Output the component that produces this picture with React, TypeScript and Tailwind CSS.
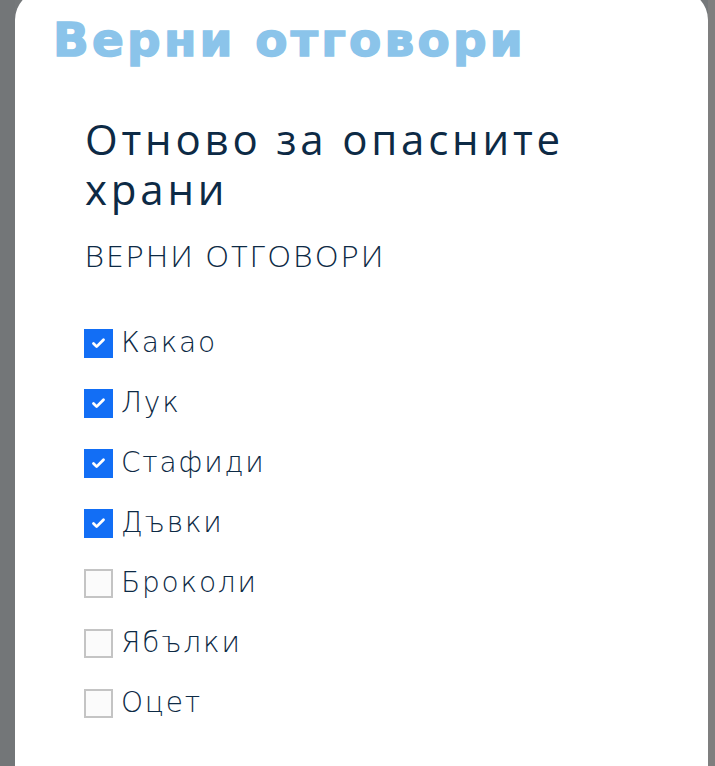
import { Check } from "lucide-react";

const answers = [
  { label: "Какао", checked: true },
  { label: "Лук", checked: true },
  { label: "Стафиди", checked: true },
  { label: "Дъвки", checked: true },
  { label: "Броколи", checked: false },
  { label: "Ябълки", checked: false },
  { label: "Оцет", checked: false },
];

export default function App() {
  return (
    <div className="h-[766px] w-[715px] overflow-hidden flex bg-[#75787a]">
      <div className="w-[15px] shrink-0 bg-[#737678]" />
      <div className="flex-1 bg-white rounded-t-[30px] -mt-[10px] pt-[20px]">
        <h1 className="pl-[38px] text-[47px] leading-[60px] font-bold text-[#8bc4ea] tracking-[3.2px] [-webkit-text-stroke:1.5px_#8bc4ea] font-['DejaVu_Sans',sans-serif]">
          Верни отговори
        </h1>

        <div className="pl-[69px] pr-[70px] pt-[44px] font-['Open_Sans',sans-serif] text-[#0d2a45]">
          <h2 className="pl-[1px] text-[42px] leading-[50px] font-medium tracking-[3.8px]">
            Отново за опасните храни
          </h2>
          <p className="pl-[1px] mt-[24px] text-[30px] leading-[36px] font-light uppercase tracking-[2.8px]">
            Верни отговори
          </p>

          <ul className="mt-[54px] flex flex-col gap-[30px]">
            {answers.map((a) => (
              <li key={a.label} className="flex items-center h-[30px]">
                {a.checked ? (
                  <span className="w-[29px] h-[29px] bg-[#126ef5] flex items-center justify-center shrink-0">
                    <Check className="w-[15px] h-[15px] text-white" strokeWidth={4.5} />
                  </span>
                ) : (
                  <span className="w-[29px] h-[29px] border-2 border-[#c4c4c4] bg-[#fbfbfb] shrink-0" />
                )}
                <span className="ml-[8px] text-[28px] font-light font-['DejaVu_Sans',sans-serif] tracking-[1.8px]">
                  {a.label}
                </span>
              </li>
            ))}
          </ul>
        </div>
      </div>
      <div className="w-[7px] shrink-0 bg-[#7f7f7f]" />
    </div>
  );
}
